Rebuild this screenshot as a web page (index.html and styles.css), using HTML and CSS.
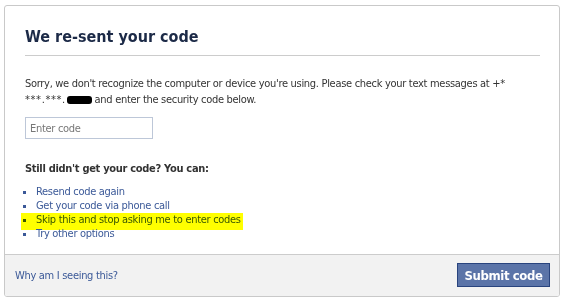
FILE: index.html
```html
<!DOCTYPE html>
<html>
<head>
<meta charset="utf-8">
<link rel="stylesheet" href="styles.css">
</head>
<body>
<div class="card">
  <div class="content">
    <h2 class="title">We re-sent your code</h2>
    <p class="msg">Sorry, we don't recognize the computer or device you're using. Please check your text messages at +*<br><span class="stars">***.***.</span><span class="redact"></span> and enter the security code below.</p>
    <input class="code" type="text" placeholder="Enter code">
    <p class="still">Still didn't get your code? You can:</p>
    <ul class="options">
      <li><a href="#">Resend code again</a></li>
      <li><a href="#">Get your code via phone call</a></li>
      <li class="hl"><a href="#">Skip this and stop asking me to enter codes</a></li>
      <li><a href="#">Try other options</a></li>
    </ul>
  </div>
  <div class="footer">
    <a href="#" class="why">Why am I seeing this?</a>
    <button class="submit">Submit code</button>
  </div>
</div>
</body>
</html>
```

FILE: styles.css
```css
html, body {
  margin: 0;
  padding: 0;
  background: #fff;
}
body {
  font-family: "DejaVu Sans Condensed", "DejaVu Sans", sans-serif;
  font-size: 11px;
  letter-spacing: -0.3px;
  color: #333;
}
.card {
  box-sizing: border-box;
  margin: 5px 0 0 4px;
  width: 556px;
  height: 292px;
  border: 1px solid #c9c9c9;
  border-radius: 3px;
  display: flex;
  flex-direction: column;
  overflow: hidden;
}
.content {
  padding: 0 19px 0 20px;
  flex: 1;
}
.title {
  margin: 0;
  padding: 21px 0 8px;
  font-size: 16px;
  line-height: 20px;
  font-weight: bold;
  letter-spacing: 0;
  color: #1c2a47;
  border-bottom: 1px solid #ccc;
}
.msg {
  margin: 0;
  padding-top: 20px;
  line-height: 16px;
}
.stars {
  letter-spacing: 0.6px;
}
.redact {
  display: inline-block;
  width: 25px;
  height: 8px;
  margin-left: 1px;
  background: #000;
  border-radius: 3px;
  vertical-align: -1px;
}
.code {
  display: block;
  box-sizing: border-box;
  margin-top: 9px;
  width: 128px;
  height: 22px;
  border: 1px solid #bdc7d8;
  padding: 3px 4px;
  font-family: inherit;
  font-size: 11px;
  letter-spacing: -0.3px;
  color: #333;
  outline: none;
}
.code::placeholder {
  color: #777;
}
.still {
  margin: 0;
  padding-top: 23px;
  font-weight: bold;
  line-height: 14px;
}
.options {
  list-style: none;
  margin: 9px 0 0;
  padding: 0;
}
.options li {
  position: relative;
  line-height: 14px;
  padding-left: 11px;
  width: max-content;
}
.options li::before {
  content: "";
  position: absolute;
  left: -2px;
  top: 6px;
  width: 3px;
  height: 3px;
  background: #3b5998;
}
.options a, .why {
  color: #3b5998;
  text-decoration: none;
}
.options li.hl::after {
  content: "";
  position: absolute;
  left: -4px;
  right: -2px;
  top: 0;
  bottom: -3px;
  background: #ffff00;
  mix-blend-mode: multiply;
}
.footer {
  border-top: 1px solid #ccc;
  background: #f2f2f2;
  height: 41px;
  padding: 0 9px 0 10px;
  display: flex;
  align-items: center;
  justify-content: space-between;
}
.why {
  font-size: 11px;
}
.submit {
  box-sizing: border-box;
  width: 93px;
  height: 24px;
  margin-top: -1px;
  background: #5b74a8;
  border: 1px solid #29447e;
  color: #fff;
  font-family: inherit;
  font-weight: bold;
  font-size: 13px;
  letter-spacing: -0.4px;
  padding: 0;
}
```
